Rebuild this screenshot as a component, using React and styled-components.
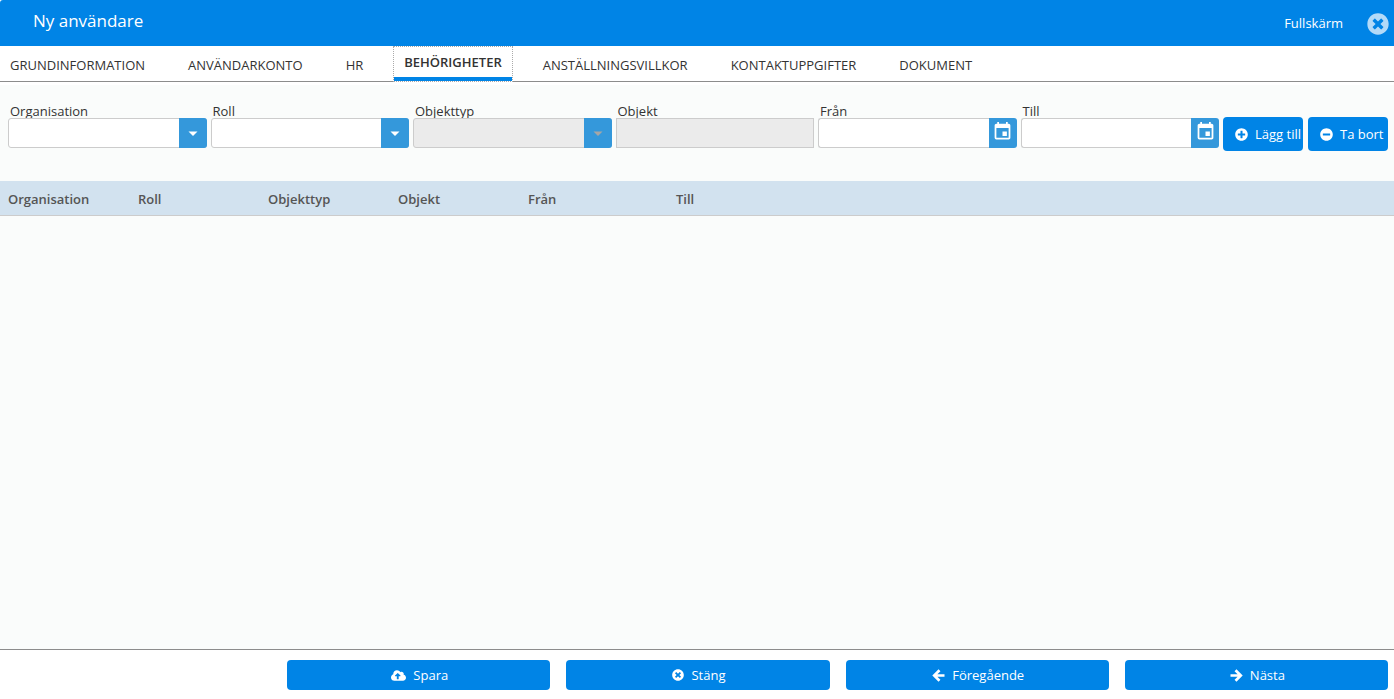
import React, { useState } from 'react';
import styled, { createGlobalStyle, css } from 'styled-components';
import {
  FaCloudUploadAlt,
  FaMinusCircle,
  FaPlusCircle,
  FaTimesCircle,
} from 'react-icons/fa';
import { MdEvent } from 'react-icons/md';

const GlobalStyle = createGlobalStyle`
  *, *::before, *::after {
    box-sizing: border-box;
  }

  body {
    margin: 0;
    background: #fff;
    font-family: 'Open Sans', 'Noto Sans', sans-serif;
    font-size: 13px;
    color: #333;
  }

  button, input, select {
    font: inherit;
    margin: 0;
  }
`;

const Dialog = styled.div`
  display: flex;
  flex-direction: column;
  min-height: 100vh;
`;

const TitleBar = styled.header`
  display: flex;
  align-items: center;
  height: 46px;
  padding: 0 5px 0 33px;
  background: #0084e6;
  border-radius: 3px 0 0 0;
  color: #fff;
`;

const Title = styled.h1`
  flex: 1;
  margin: 0;
  padding-bottom: 4px;
  font-size: 17px;
  font-weight: 400;
  line-height: 24px;
`;

const FullscreenButton = styled.button`
  margin-right: 24px;
  padding: 0;
  border: 0;
  background: none;
  color: inherit;
  line-height: 20px;
  cursor: pointer;
`;

const CloseButton = styled.button`
  display: flex;
  padding: 2px 0 0;
  border: 0;
  background: none;
  color: #b3daf8;
  font-size: 22px;
  cursor: pointer;
`;

const TabList = styled.div`
  display: flex;
  gap: 17px;
  height: 36px;
  border-bottom: 1px solid #8c8c8c;
`;

const Tab = styled.button`
  padding: 2px 13px 0;
  border: 0;
  background: none;
  color: #333;
  line-height: 20px;
  text-transform: uppercase;
  white-space: nowrap;
  cursor: pointer;

  &:first-child {
    padding-left: 10px;
  }

  ${({ $active }) =>
    $active &&
    css`
      margin-bottom: -1px;
      padding: 0;
      border: 1px dotted #aaa;
      background: #fff;
      font-weight: 600;
    `}
`;

const ActiveLabel = styled.span`
  display: flex;
  align-items: center;
  height: 100%;
  padding: 0 10px;
  border-bottom: 4px solid #0084e6;
`;

const Panel = styled.main`
  flex: 1;
  margin-top: 3px;
  background: #fafcfb;
`;

const FilterRow = styled.form`
  display: flex;
  align-items: flex-end;
  gap: 4px;
  padding: 19px 6px 30px 8px;
`;

const Field = styled.div`
  flex: 1;
  min-width: 0;
  margin-bottom: 3px;
`;

const FieldLabel = styled.label`
  display: block;
  padding-left: 2px;
  overflow: hidden;
  line-height: 14px;
`;

const Control = styled.div`
  display: grid;
  grid-template-columns: 1fr 28px;
  height: 30px;
`;

const boxStyle = css`
  width: 100%;
  min-width: 0;
  height: 30px;
  padding: 0 8px;
  border: 1px solid #ccc;
  background: #fff;
  color: #333;

  &:disabled {
    background: #ebebeb;
    opacity: 1;
  }
`;

const Select = styled.select`
  ${boxStyle}
  grid-area: 1 / 1 / 2 / 3;
  appearance: none;
  border-radius: 3px;
`;

const TextInput = styled.input`
  ${boxStyle}
  display: block;
  border-radius: 0;
`;

const DateInput = styled.input`
  ${boxStyle}
  border-right: 0;
  border-radius: 3px 0 0 3px;
`;

const Arrow = styled.span`
  grid-area: 1 / 2;
  display: flex;
  align-items: center;
  justify-content: center;
  border-radius: 0 3px 3px 0;
  background: #3498db;
  color: ${({ $disabled }) => ($disabled ? '#a6a6a6' : '#fff')};
  pointer-events: none;
`;

const CalendarButton = styled.button`
  display: flex;
  align-items: center;
  justify-content: center;
  padding: 0 0 3px;
  border: 0;
  border-radius: 0 3px 3px 0;
  background: #3498db;
  color: #fff;
  font-size: 21px;
  cursor: pointer;
`;

const Button = styled.button`
  display: flex;
  align-items: center;
  justify-content: center;
  gap: 7px;
  height: 30px;
  padding: 0 0 0 2px;
  border: 0;
  border-radius: 4px;
  background: #0084e6;
  color: #fff;
  white-space: nowrap;
  cursor: pointer;

  svg {
    flex-shrink: 0;
  }
`;

const RowButtons = styled.div`
  display: flex;
  gap: 5px;
`;

const RowButton = styled(Button)`
  flex: 0 0 80px;
  justify-content: flex-start;
  height: 34px;
  padding-left: 12px;
  overflow: hidden;
`;

const Table = styled.table`
  width: 100%;
  border-collapse: collapse;
  table-layout: fixed;
`;

const HeadCell = styled.th`
  width: ${({ $width }) => ($width ? `${$width}px` : 'auto')};
  height: 34px;
  padding: 2px 8px 0;
  border-bottom: 1px solid #ccc;
  background: #d2e2ef;
  color: #555;
  font-weight: 600;
  text-align: left;
`;

const Footer = styled.footer`
  display: grid;
  grid-template-columns: repeat(5, 1fr);
  gap: 16px;
  padding: 10px 6px 9px 8px;
  border-top: 1px solid #8c8c8c;
  background: #fff;

  ${Button}:first-child {
    grid-column-start: 2;
  }
`;

const TABS = [
  'Grundinformation',
  'Användarkonto',
  'HR',
  'Behörigheter',
  'Anställningsvillkor',
  'Kontaktuppgifter',
  'Dokument',
];

const COLUMNS = [
  { label: 'Organisation', width: 130 },
  { label: 'Roll', width: 130 },
  { label: 'Objekttyp', width: 130 },
  { label: 'Objekt', width: 130 },
  { label: 'Från', width: 148 },
  { label: 'Till' },
];

const ArrowIcon = ({ d }) => (
  <svg width="13" height="13" viewBox="0 0 13 13" fill="none" stroke="currentColor" strokeWidth="2.7">
    <path d={d} />
  </svg>
);

const SelectField = ({ id, label, disabled }) => (
  <Field>
    <FieldLabel htmlFor={id}>{label}</FieldLabel>
    <Control>
      <Select id={id} disabled={disabled} />
      <Arrow $disabled={disabled}>
        <svg width="10" height="5" viewBox="0 0 10 5" fill="currentColor">
          <path d="M0.5 0.5h9L5 5z" />
        </svg>
      </Arrow>
    </Control>
  </Field>
);

const DateField = ({ id, label }) => (
  <Field>
    <FieldLabel htmlFor={id}>{label}</FieldLabel>
    <Control>
      <DateInput id={id} type="text" />
      <CalendarButton type="button" aria-label={`Välj datum: ${label}`}>
        <MdEvent />
      </CalendarButton>
    </Control>
  </Field>
);

const App = () => {
  const [activeTab, setActiveTab] = useState('Behörigheter');

  return (
    <>
      <GlobalStyle />
      <Dialog>
        <TitleBar>
          <Title>Ny användare</Title>
          <FullscreenButton type="button">Fullskärm</FullscreenButton>
          <CloseButton type="button" aria-label="Stäng dialogen">
            <FaTimesCircle />
          </CloseButton>
        </TitleBar>

        <TabList role="tablist">
          {TABS.map(tab => (
            <Tab
              key={tab}
              type="button"
              role="tab"
              aria-selected={tab === activeTab}
              $active={tab === activeTab}
              onClick={() => setActiveTab(tab)}
            >
              {tab === activeTab ? <ActiveLabel>{tab}</ActiveLabel> : tab}
            </Tab>
          ))}
        </TabList>

        <Panel>
          <FilterRow onSubmit={e => e.preventDefault()}>
            <SelectField id="organisation" label="Organisation" />
            <SelectField id="roll" label="Roll" />
            <SelectField id="objekttyp" label="Objekttyp" disabled />
            <Field>
              <FieldLabel htmlFor="objekt">Objekt</FieldLabel>
              <TextInput id="objekt" type="text" disabled />
            </Field>
            <DateField id="fran" label="Från" />
            <DateField id="till" label="Till" />
            <RowButtons>
              <RowButton type="button">
                <FaPlusCircle />
                Lägg till
              </RowButton>
              <RowButton type="button">
                <FaMinusCircle />
                Ta bort
              </RowButton>
            </RowButtons>
          </FilterRow>

          <Table>
            <thead>
              <tr>
                {COLUMNS.map(({ label, width }) => (
                  <HeadCell key={label} scope="col" $width={width}>
                    {label}
                  </HeadCell>
                ))}
              </tr>
            </thead>
          </Table>
        </Panel>

        <Footer>
          <Button type="button">
            <FaCloudUploadAlt size={15} />
            Spara
          </Button>
          <Button type="button">
            <FaTimesCircle size={12} />
            Stäng
          </Button>
          <Button type="button">
            <ArrowIcon d="M12.5 6.5H2.5M7.5 1.2L2.2 6.5l5.3 5.3" />
            Föregående
          </Button>
          <Button type="button">
            <ArrowIcon d="M0.5 6.5h10M5.5 1.2l5.3 5.3l-5.3 5.3" />
            Nästa
          </Button>
        </Footer>
      </Dialog>
    </>
  );
};

export default App;
